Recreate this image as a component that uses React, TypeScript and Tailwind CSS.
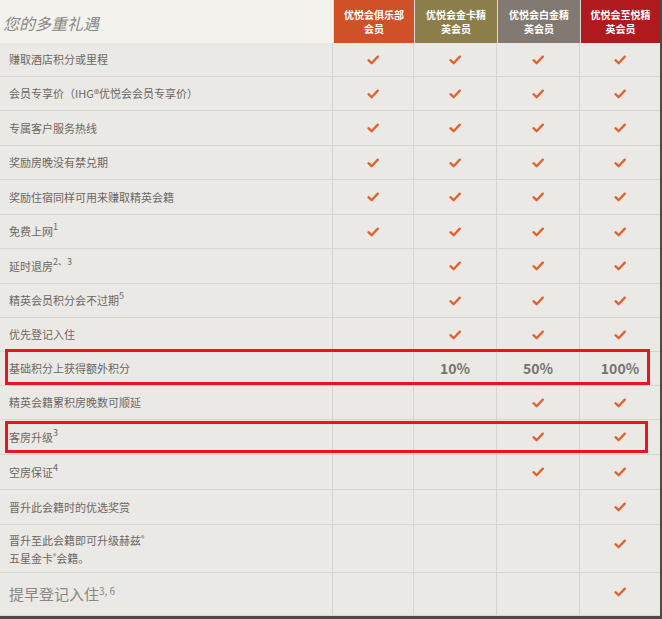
const F = { fontFamily: '"Noto Sans CJK SC","Liberation Sans",sans-serif' };

function Check() {
  return (
    <svg width="12" height="10" viewBox="0 0 12 10">
      <path d="M1.5 5.2 L4.6 8.2 L10.8 1.6" fill="none" stroke="#e0622f" strokeWidth="2.3" strokeLinecap="round" strokeLinejoin="round" />
    </svg>
  );
}

type Row = { label: React.ReactNode; v: (string | boolean)[]; h: number };

const rows: Row[] = [
  { label: "赚取酒店积分或里程", v: [true, true, true, true], h: 34 },
  { label: "会员专享价（IHG®优悦会会员专享价）", v: [true, true, true, true], h: 34 },
  { label: "专属客户服务热线", v: [true, true, true, true], h: 35 },
  { label: "奖励房晚没有禁兑期", v: [true, true, true, true], h: 34 },
  { label: "奖励住宿同样可用来赚取精英会籍", v: [true, true, true, true], h: 35 },
  { label: <>免费上网 <sup className="text-[9px]">1</sup></>, v: [true, true, true, true], h: 34 },
  { label: <>延时退房 <sup className="text-[9px]">2、3</sup></>, v: [false, true, true, true], h: 35 },
  { label: <>精英会员积分会不过期 <sup className="text-[9px]">5</sup></>, v: [false, true, true, true], h: 34 },
  { label: "优先登记入住", v: [false, true, true, true], h: 34 },
  { label: "基础积分上获得额外积分", v: [false, "10%", "50%", "100%"], h: 34 },
  { label: "精英会籍累积房晚数可顺延", v: [false, false, true, true], h: 34 },
  { label: <>客房升级 <sup className="text-[9px]">3</sup></>, v: [false, false, true, true], h: 35 },
  { label: <>空房保证 <sup className="text-[9px]">4</sup></>, v: [false, false, true, true], h: 35 },
  { label: "晋升此会籍时的优选奖赏", v: [false, false, false, true], h: 35 },
  { label: <div className="leading-[18px]">晋升至此会籍即可升级赫兹<sup className="text-[7px]">®</sup><br />五星金卡<sup className="text-[7px]">®</sup>会籍。</div>, v: [false, false, false, true], h: 48 },
  { label: <span className="text-[15px] text-[#8a8683]">提早登记入住<sup className="text-[10px]">3, 6</sup></span>, v: [false, false, false, true], h: 43 },
];

const heads = [
  { t: ["优悦会俱乐部", "会员"], c: "bg-[#d05127]" },
  { t: ["优悦会金卡精", "英会员"], c: "bg-[#8b7e4a]" },
  { t: ["优悦会白金精", "英会员"], c: "bg-[#827a72]" },
  { t: ["优悦会至悦精", "英会员"], c: "bg-[#b0191e]" },
];

const cols = "grid grid-cols-[333px_81px_83px_83px_80px]";

export default function App() {
  return (
    <div className="w-[662px] h-[619px] bg-[#4a4a4a] pr-[2px] pb-[3px]" style={F}>
      <div className="relative w-[660px] h-[616px] bg-[#ebe9e5] overflow-hidden">
        <div className={`${cols} h-[43px]`}>
          <div className="bg-[#f3f2ed] flex items-end pb-[8px] pl-[3px] text-[16px] italic text-[#8c8884]">您的多重礼遇</div>
          {heads.map((h, i) => (
            <div key={i} className={`${h.c} flex flex-col items-center justify-center text-white text-[10px] font-bold leading-[14px] border-l border-[#e0ddd7]`}>
              <div>{h.t[0]}</div>
              <div>{h.t[1]}</div>
            </div>
          ))}
        </div>
        {rows.map((r, i) => (
          <div key={i} className={`${cols} border-b border-[#d8d5cf]`} style={{ height: r.h }}>
            <div className="flex items-center pl-[9px] text-[11px] text-[#6b6763] border-r border-[#d8d5cf]">
              {r.label}
            </div>
            {r.v.map((v, j) => (
              <div key={j} className={`flex ${r.h > 40 ? "items-start pt-[14px]" : "items-center"} justify-center border-r border-[#d8d5cf] last:border-r-0 text-[14px] font-bold text-[#77736f]`}>
                {v === true ? <Check /> : typeof v === "string" ? v : null}
              </div>
            ))}
          </div>
        ))}
        <div className="absolute left-[5px] top-[349px] w-[645px] h-[36px] border-[3px] border-[#e8141e]" />
        <div className="absolute left-[5px] top-[421px] w-[643px] h-[32px] border-[3px] border-[#e8141e]" />
      </div>
    </div>
  );
}
